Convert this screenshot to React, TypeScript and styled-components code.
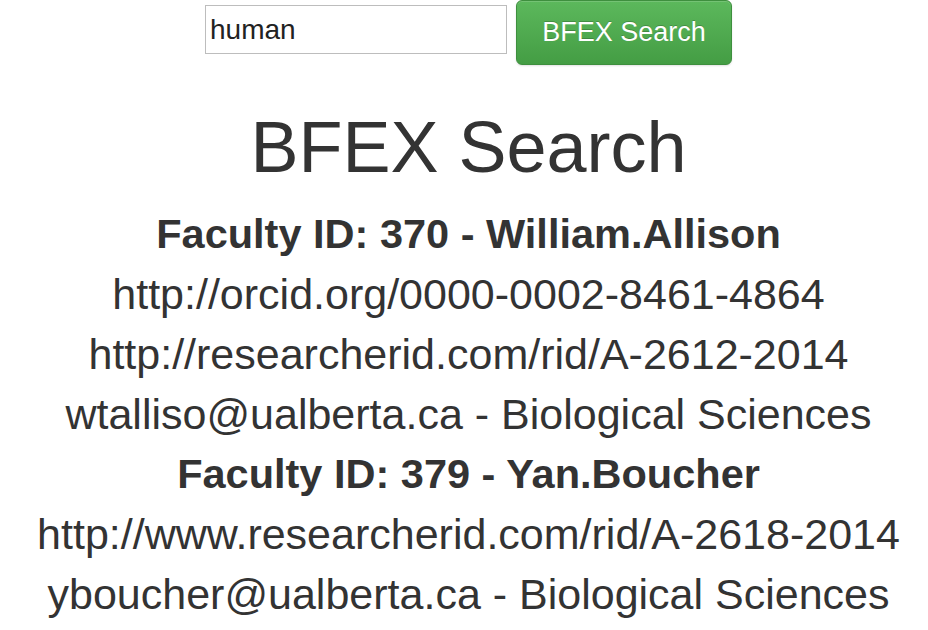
import React from "react";
import styled, { createGlobalStyle } from "styled-components";

const GlobalStyle = createGlobalStyle`
  html, body {
    margin: 0;
    padding: 0;
    background: #ffffff;
  }
  body {
    font-family: "Liberation Sans", Arial, Helvetica, sans-serif;
    color: #333333;
  }
`;

const Page = styled.div`
  padding-left: 9px;
  text-align: center;
`;

const SearchForm = styled.form`
  display: flex;
  justify-content: center;
  align-items: flex-start;
  gap: 9px;
  margin: 0;
`;

const SearchInput = styled.input`
  box-sizing: border-box;
  width: 302px;
  height: 49px;
  margin-top: 5px;
  padding: 0 4px;
  border: 1px solid #bdbdbd;
  border-radius: 0;
  font-family: "Liberation Sans", Arial, sans-serif;
  font-size: 28px;
  color: #222222;
  outline: none;
  background: #fff;
`;

const SearchButton = styled.button`
  box-sizing: border-box;
  width: 216px;
  height: 65px;
  padding: 0;
  border: 1px solid #3e8f3e;
  border-radius: 6px;
  background-image: linear-gradient(to bottom, #5cb85c 0%, #449d44 100%);
  box-shadow: inset 0 1px 0 rgba(255, 255, 255, 0.15), 0 1px 2px rgba(0, 0, 0, 0.12);
  color: #ffffff;
  font-family: "Liberation Sans", Arial, sans-serif;
  font-size: 27px;
  text-shadow: 0 -1px 0 rgba(0, 0, 0, 0.2);
  cursor: pointer;
`;

const Title = styled.h1`
  margin: 42px 0 17px;
  font-size: 72px;
  line-height: 80px;
  font-weight: 400;
  color: #333333;
`;

const ResultList = styled.div`
  display: flex;
  flex-direction: column;
`;

const Line = styled.div<{ $bold?: boolean }>`
  height: 60px;
  line-height: 60px;
  white-space: nowrap;
  font-size: ${(p) => (p.$bold ? "41.5px" : "43px")};
  font-weight: ${(p) => (p.$bold ? 700 : 400)};
  color: #333333;
`;

type Faculty = {
  id: number;
  name: string;
  links: string[];
  email: string;
  department: string;
};

const results: Faculty[] = [
  {
    id: 370,
    name: "William.Allison",
    links: [
      "http://orcid.org/0000-0002-8461-4864",
      "http://researcherid.com/rid/A-2612-2014",
    ],
    email: "wtalliso@ualberta.ca",
    department: "Biological Sciences",
  },
  {
    id: 379,
    name: "Yan.Boucher",
    links: ["http://www.researcherid.com/rid/A-2618-2014"],
    email: "yboucher@ualberta.ca",
    department: "Biological Sciences",
  },
];

export default function App() {
  return (
    <Page>
      <GlobalStyle />
      <SearchForm onSubmit={(e) => e.preventDefault()}>
        <SearchInput type="text" defaultValue="human" />
        <SearchButton type="submit">BFEX Search</SearchButton>
      </SearchForm>
      <Title>BFEX Search</Title>
      <ResultList>
        {results.map((r) => (
          <React.Fragment key={r.id}>
            <Line $bold>
              Faculty ID: {r.id} - {r.name}
            </Line>
            {r.links.map((l) => (
              <Line key={l}>{l}</Line>
            ))}
            <Line>
              {r.email} - {r.department}
            </Line>
          </React.Fragment>
        ))}
      </ResultList>
    </Page>
  );
}
